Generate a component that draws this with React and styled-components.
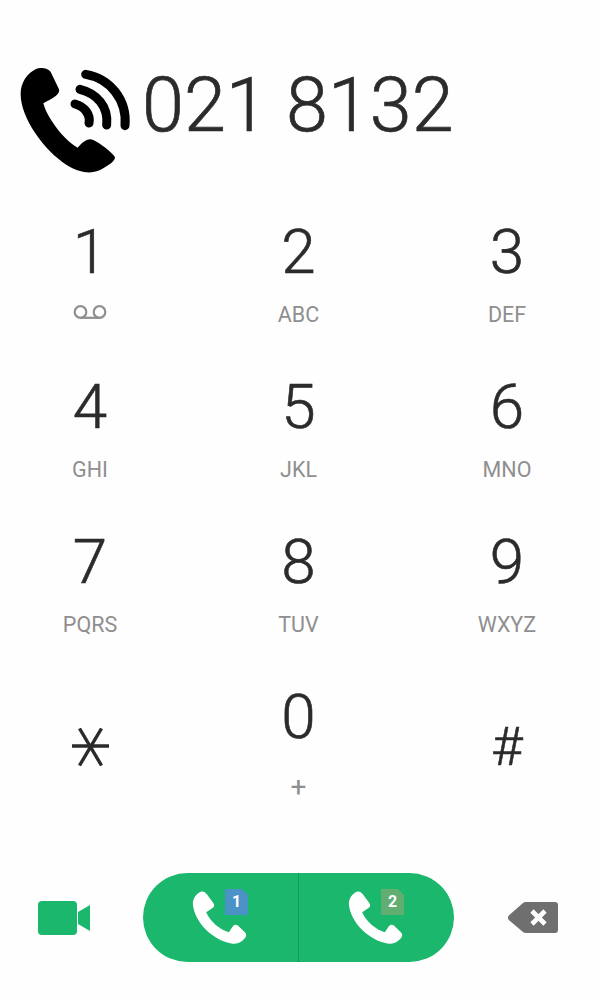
import React from 'react';
import styled, { createGlobalStyle } from 'styled-components';

const keys = [
  { digit: '1', voicemail: true },
  { digit: '2', label: 'ABC' },
  { digit: '3', label: 'DEF' },
  { digit: '4', label: 'GHI' },
  { digit: '5', label: 'JKL' },
  { digit: '6', label: 'MNO' },
  { digit: '7', label: 'PQRS' },
  { digit: '8', label: 'TUV' },
  { digit: '9', label: 'WXYZ' },
];

const CallIcon = () => (
  <CallSvg viewBox="576 98 164 162">
    <path d="M602 100 C610 98 615 102 620 108 L640 135 C644 142 642 146 636 150 L618 162 C630 190 660 215 686 222 L698 204 C702 198 708 198 714 202 L734 222 C740 228 739 234 734 240 C724 252 712 258 698 256 C640 248 582 192 578 136 C578 120 588 106 602 100 Z" />
  </CallSvg>
);

const App = () => (
  <Page>
    <GlobalStyle />
    <Header>
      <RingSvg viewBox="60 54 336 315">
        <path d="M108 57 C125 50 150 55 155 72 L177 118 C180 130 170 140 130 160 C140 200 190 270 233 293 C245 280 262 262 280 270 C300 280 335 305 345 322 C345 335 325 345 310 355 C280 375 240 370 200 345 C130 300 60 200 62 130 C62 100 80 70 108 57 Z" fill="#000" />
        <g fill="none" stroke="#000" strokeWidth="27" strokeLinecap="round">
          <path d="M257 73 C330 85 382 150 375 227" />
          <path d="M240 118 C290 130 326 170 320 225" />
          <path d="M225 162 C255 170 272 195 267 219" />
        </g>
      </RingSvg>
      <Number>021 8132</Number>
    </Header>
    <Keypad>
      {keys.map((key) => (
        <Key key={key.digit}>
          <Digit>{key.digit}</Digit>
          {key.voicemail ? (
            <VoicemailSvg viewBox="0 0 34 14">
              <circle cx="7.5" cy="7" r="5.8" />
              <circle cx="26.5" cy="7" r="5.8" />
              <path d="M7.5 12.8 H26.5" />
            </VoicemailSvg>
          ) : (
            <Label>{key.label}</Label>
          )}
        </Key>
      ))}
      <SymbolKey>
        <StarSvg viewBox="0 0 37 38">
          <path d="M0 18 H37 M7.5 0.5 L29.5 37.5 M29.5 0.5 L7.5 37.5" />
        </StarSvg>
      </SymbolKey>
      <Key>
        <Digit>0</Digit>
        <Label $wide>+</Label>
      </Key>
      <SymbolKey>
        <Hash>#</Hash>
      </SymbolKey>
    </Keypad>
    <BottomBar>
      <VideoSvg viewBox="0 0 52 34">
        <rect x="0" y="0" width="39" height="34" rx="4" />
        <path d="M40 11 L52 4 V30 L40 23 Z" />
      </VideoSvg>
      <CallPill>
        <CallHalf $divider>
          <CallIcon />
          <Sim $color="#4b93c6">1</Sim>
        </CallHalf>
        <CallHalf>
          <CallIcon />
          <Sim $color="#62ad71">2</Sim>
        </CallHalf>
      </CallPill>
      <BackspaceSvg viewBox="0 0 50 31">
        <path d="M0.8 13.5 L15 1 Q16 0 18 0 H47 Q50 0 50 3 V28 Q50 31 47 31 H18 Q16 31 15 30 L0.8 18 Q-0.8 15.7 0.8 13.5 Z" fill="#6f6f6f" />
        <path d="M24 9 L37 22 M37 9 L24 22" stroke="#fff" strokeWidth="4.6" fill="none" />
      </BackspaceSvg>
    </BottomBar>
  </Page>
);

const GlobalStyle = createGlobalStyle`
  html, body {
    margin: 0;
    padding: 0;
    background: #fefefe;
    font-family: 'Roboto', sans-serif;
  }
`;

const Page = styled.div`
  width: 600px;
  height: 998px;
  overflow: hidden;
  background: #fefefe;
`;

const Header = styled.div`
  display: flex;
  align-items: flex-start;
  height: 132px;
  padding: 68px 0 0 20px;
  gap: 10px;
`;

const RingSvg = styled.svg`
  width: 112px;
  height: 105px;
  flex: none;
`;

const Number = styled.div`
  font-size: 75.5px;
  font-weight: 300;
  -webkit-text-stroke: 0.7px #2b2b2b;
  line-height: 74px;
  color: #2b2b2b;
  white-space: nowrap;
`;

const Keypad = styled.div`
  display: grid;
  grid-template-columns: repeat(3, 180px);
  grid-template-rows: repeat(3, 155px) 164px;
  column-gap: 28.5px;
`;

const Key = styled.div`
  display: flex;
  flex-direction: column;
  align-items: center;
  padding-top: 17px;
`;

const SymbolKey = styled.div`
  display: flex;
  align-items: center;
  justify-content: center;
`;

const Digit = styled.div`
  font-size: 62px;
  font-weight: 300;
  -webkit-text-stroke: 0.6px #2b2b2b;
  line-height: 70px;
  color: #2b2b2b;
`;

const Label = styled.div`
  margin-top: ${(p) => (p.$wide ? '23px' : '16px')};
  font-size: ${(p) => (p.$wide ? '28px' : '21.5px')};
  line-height: 24px;
  color: #8f8f8f;
`;

const VoicemailSvg = styled.svg`
  width: 34px;
  height: 14px;
  margin-top: 18px;
  fill: none;
  stroke: #8f8f8f;
  stroke-width: 2.2;
`;

const StarSvg = styled.svg`
  width: 37px;
  height: 38px;
  fill: none;
  stroke: #2b2b2b;
  stroke-width: 3.4;
`;

const Hash = styled.div`
  font-size: 54px;
  font-weight: 300;
  -webkit-text-stroke: 0.6px #2b2b2b;
  line-height: 50px;
  color: #2b2b2b;
`;

const BottomBar = styled.div`
  display: flex;
  align-items: center;
  gap: 53px;
  height: 89px;
  margin-top: 44px;
  padding-left: 38px;
`;

const VideoSvg = styled.svg`
  width: 52px;
  height: 34px;
  fill: #1ab76c;
`;

const CallPill = styled.div`
  display: flex;
  width: 311px;
  height: 89px;
  border-radius: 45px;
  overflow: hidden;
  background: #1ab76c;
`;

const CallHalf = styled.div`
  position: relative;
  display: flex;
  flex: 1;
  align-items: center;
  justify-content: center;
  border-right: ${(p) => (p.$divider ? '1px solid #129a58' : 'none')};
`;

const CallSvg = styled.svg`
  width: 55px;
  height: 54px;
  margin-right: 2px;
  fill: #fff;
`;

const Sim = styled.div`
  position: absolute;
  top: 16px;
  left: 82px;
  width: 23px;
  height: 26px;
  background: ${(p) => p.$color};
  clip-path: polygon(0 0, 72% 0, 100% 22%, 100% 100%, 0 100%);
  color: #fff;
  font-size: 16px;
  font-weight: 700;
  line-height: 26px;
  text-align: center;
`;

const BackspaceSvg = styled.svg`
  width: 50px;
  height: 31px;
  margin-left: 1px;
`;

export default App;
